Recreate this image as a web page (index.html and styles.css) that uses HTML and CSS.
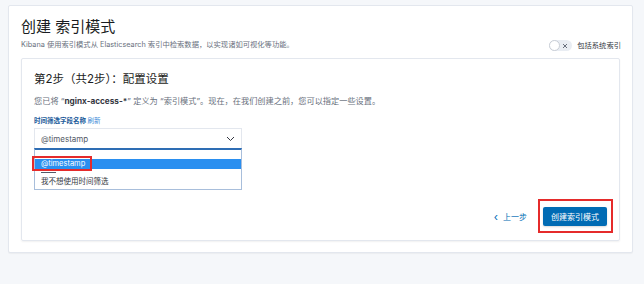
FILE: index.html
```html
<!DOCTYPE html>
<html lang="zh-CN">
<head>
<meta charset="utf-8">
<link rel="stylesheet" href="styles.css">
</head>
<body>
<div class="page">
  <section class="panel">
    <header class="head">
      <div class="head-text">
        <h1 class="title">创建 索引模式</h1>
        <p class="subtitle">Kibana 使用索引模式从 Elasticsearch 索引中检索数据，以实现诸如可视化等功能。</p>
      </div>
      <div class="switch-row">
        <span class="switch">
          <span class="knob"></span>
          <svg class="switch-x" width="6" height="6" viewBox="0 0 6 6"><path d="M1 1L5 5M5 1L1 5" stroke="#69707d" stroke-width="1" fill="none"/></svg>
        </span>
        <span class="switch-label">包括系统索引</span>
      </div>
    </header>

    <div class="card">
      <h2 class="step">第2步（共2步）：配置设置</h2>
      <p class="desc">您已将 “<b>nginx-access-*</b>” 定义为 “索引模式”。现在，在我们创建之前，您可以指定一些设置。</p>
      <div class="field-label">时间筛选字段名称 <span class="link">刷新</span></div>
      <div class="select-wrap">
        <div class="select">
          <span>@timestamp</span>
          <svg class="chev" width="9" height="6" viewBox="0 0 9 6"><path d="M1 1L4.5 4.5L8 1" stroke="#343741" stroke-width="1" fill="none"/></svg>
        </div>
        <ul class="dropdown">
          <li class="opt empty"></li>
          <li class="opt active">@timestamp<span class="mark mark-opt"></span></li>
          <li class="opt sep"><span class="sep-line"></span></li>
          <li class="opt">我不想使用时间筛选</li>
        </ul>
      </div>
      <div class="footer">
        <button class="back"><span class="back-chev">‹</span> 上一步</button>
        <span class="btn-wrap">
          <button class="primary">创建索引模式</button>
          <span class="mark mark-btn"></span>
        </span>
      </div>
    </div>
  </section>
</div>
</body>
</html>
```
FILE: styles.css
```css
* { box-sizing: border-box; }
html, body { margin: 0; padding: 0; }
body {
  background: #f5f7fa;
  font-family: "Inter", "Noto Sans CJK SC", sans-serif;
  color: #343741;
  width: 644px;
  height: 284px;
  overflow: hidden;
}
.page { padding: 5px 11px 0 8px; }
.panel {
  background: #fff;
  border: 1px solid #e3e7ee;
  border-radius: 2px;
  height: 248px;
  padding: 12px 12px 0 12px;
  box-shadow: 0 1px 1px rgba(0,0,0,0.04);
}
.head {
  display: flex;
  justify-content: space-between;
  align-items: flex-start;
  height: 35px;
}
.title {
  margin: 0;
  font-size: 15px;
  font-weight: 400;
  line-height: 18px;
  color: #1a1c21;
}
.subtitle {
  margin: 4px 0 0;
  font-size: 7.3px;
  line-height: 10px;
  color: #69707d;
}
.switch-row {
  display: flex;
  align-items: center;
  gap: 5px;
  margin-right: -1px;
  margin-top: 22px;
}
.switch {
  position: relative;
  width: 23px;
  height: 11px;
  border-radius: 6px;
  background: #e9edf3;
  display: inline-block;
}
.knob {
  position: absolute;
  left: 0;
  top: 0;
  width: 11px;
  height: 11px;
  border-radius: 50%;
  background: #fff;
  border: 1px solid #c9ced6;
}
.switch-x { position: absolute; right: 4px; top: 2.5px; }
.switch-label { font-size: 7.3px; color: #343741; line-height: 10px; }

.card {
  margin-top: 5px;
  border: 1px solid #e3e7ee;
  border-radius: 2px;
  height: 183px;
  padding: 12px 12px 0 12px;
  box-shadow: 0 1px 2px rgba(0,0,0,0.06);
}
.step {
  margin: 0;
  font-size: 11.5px;
  font-weight: 400;
  line-height: 16px;
  color: #1a1c21;
}
.desc {
  margin: 8px 0 0;
  font-size: 8.2px;
  line-height: 12px;
  color: #69707d;
}
.desc b { color: #343741; font-weight: 700; }
.field-label {
  margin-top: 10px;
  font-size: 6.5px;
  line-height: 9px;
  font-weight: 700;
  color: #1a5a9a;
}
.field-label .link { color: #3d8ad8; font-weight: 400; }
.select-wrap {
  position: relative;
  width: 208px;
  margin-top: 2px;
}
.select {
  height: 20px;
  border: 1px solid #e3e7ee;
  border-bottom: none;
  background: #fff;
  display: flex;
  align-items: center;
  justify-content: space-between;
  padding: 0 6px 0 6px;
  font-size: 8px;
  color: #535966;
}
.chev { margin-top: 1px; }
.dropdown {
  position: absolute;
  left: 0;
  top: 100%;
  width: 208px;
  margin: 0;
  padding: 0;
  list-style: none;
  background: #fff;
  border: 1px solid #a8bedb;
  border-top: 2px solid #2e6db4;
}
.opt {
  position: relative;
  height: 10px;
  font-size: 7.5px;
  line-height: 10px;
  padding-left: 6px;
  color: #343741;
}
.opt.empty { height: 9px; }
.opt.active {
  background: #2a8ff0;
  color: #fff;
}
.opt.sep { height: 7px; display: flex; align-items: center; }
.sep-line { display: block; width: 15px; height: 1px; background: #535966; }
.opt:last-child { height: 13px; line-height: 12px; }
.mark {
  position: absolute;
  border: 2px solid #e52b2b;
  pointer-events: none;
}
.mark-opt { left: -3px; top: -3px; width: 60px; height: 15px; }

.footer {
  margin-top: 59px;
  display: flex;
  justify-content: flex-end;
  align-items: center;
  gap: 16px;
}
.back {
  border: none;
  background: none;
  padding: 0;
  font-family: inherit;
  font-size: 8px;
  color: #006bb4;
  display: flex;
  align-items: center;
  gap: 5px;
}
.back-chev { font-size: 11px; line-height: 8px; }
.btn-wrap { position: relative; display: inline-block; }
.primary {
  display: block;
  width: 64px;
  height: 19px;
  border: none;
  border-radius: 2px;
  background: #006bb4;
  color: #fff;
  font-family: inherit;
  font-size: 8px;
  padding: 0;
  box-shadow: 0 1px 2px rgba(0,0,0,0.15);
}
.mark-btn { left: -5px; top: -8px; right: -6px; bottom: -7px; }
```
